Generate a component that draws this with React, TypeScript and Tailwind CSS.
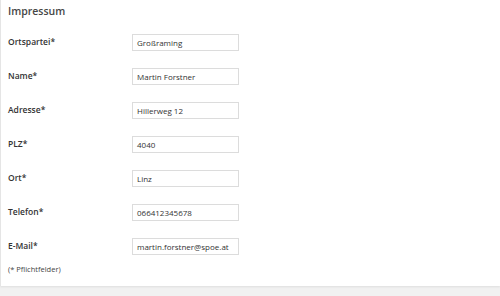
const fields = [
  { label: 'Ortspartei*', value: 'Großraming' },
  { label: 'Name*', value: 'Martin Forstner' },
  { label: 'Adresse*', value: 'Hillerweg 12' },
  { label: 'PLZ*', value: '4040' },
  { label: 'Ort*', value: 'Linz' },
  { label: 'Telefon*', value: '066412345678' },
  { label: 'E-Mail*', value: 'martin.forstner@spoe.at' },
];

export default function App() {
  return (
    <div className="w-[500px] h-[296px] bg-[#f1f1f1] overflow-hidden" style={{ fontFamily: '"Open Sans", sans-serif' }}>
      <div className="h-[286px] bg-white border-l border-[#e5e5e5] shadow-[0_1px_2px_rgba(0,0,0,0.08)] px-[7px]">
        <h2 className="pt-[4px] h-[34px] text-[10.5px] font-semibold text-[#464646] leading-[14px]">Impressum</h2>
        <div className="flex flex-col gap-[17px]">
          {fields.map((f) => (
            <div key={f.label} className="flex items-center h-[17px]">
              <div className="w-[124px] text-[8.5px] font-semibold text-[#333]">{f.label}</div>
              <div className="w-[107px] h-[17px] border border-[#dcdcdc] px-[4px] flex items-center text-[8px] text-[#333]">
                {f.value}
              </div>
            </div>
          ))}
        </div>
        <p className="mt-[9px] text-[7.5px] text-[#444] leading-[10px]">(* Pflichtfelder)</p>
      </div>
    </div>
  );
}
